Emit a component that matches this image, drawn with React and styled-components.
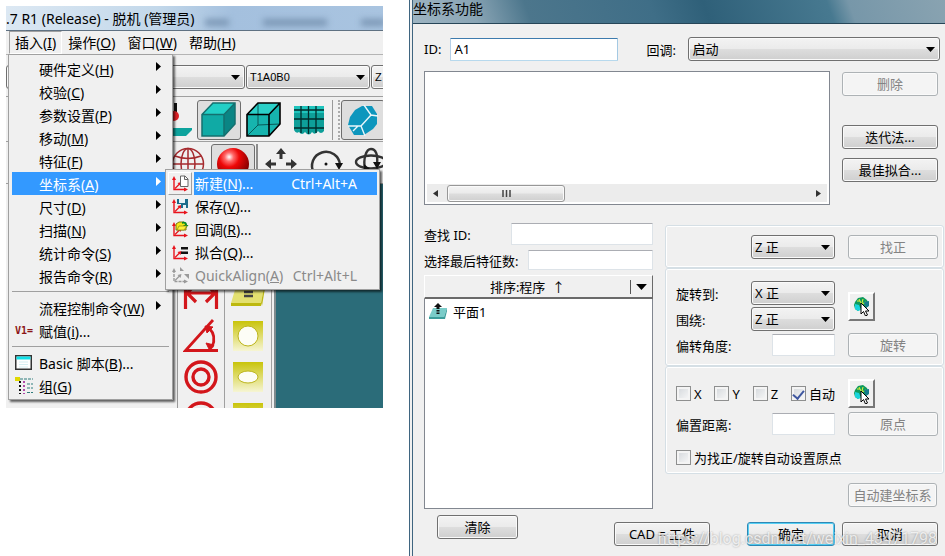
import React, { useState } from 'react';
import styled, { createGlobalStyle, css } from 'styled-components';

const GlobalStyle = createGlobalStyle`
  * {
    box-sizing: border-box;
  }
  body {
    margin: 0;
    background: #fff;
    color: #000;
    font-family: "Noto Sans", "Noto Sans CJK SC", sans-serif;
    font-size: 13px;
  }
  button, input, select {
    margin: 0;
    font: inherit;
    color: inherit;
  }
`;

const insertMenu = [
  { label: '硬件定义', hotkey: 'H', sub: true },
  { label: '校验', hotkey: 'C', sub: true },
  { label: '参数设置', hotkey: 'P', sub: true },
  { label: '移动', hotkey: 'M', sub: true },
  { label: '特征', hotkey: 'F', sub: true },
  { label: '坐标系', hotkey: 'A', sub: true, open: true },
  { label: '尺寸', hotkey: 'D', sub: true },
  { label: '扫描', hotkey: 'N', sub: true },
  { label: '统计命令', hotkey: 'S', sub: true },
  { label: '报告命令', hotkey: 'R', sub: true },
  { divider: true },
  { label: '流程控制命令', hotkey: 'W', sub: true },
  { label: '赋值', hotkey: 'i', dots: true, icon: 'assign' },
  { divider: true },
  { label: 'Basic 脚本', hotkey: 'B', dots: true, icon: 'basic' },
  { label: '组', hotkey: 'G', icon: 'group' },
];

const alignMenu = [
  { label: '新建', hotkey: 'N', dots: true, keys: 'Ctrl+Alt+A', icon: 'new', active: true },
  { label: '保存', hotkey: 'V', dots: true, icon: 'save' },
  { label: '回调', hotkey: 'R', dots: true, icon: 'recall' },
  { label: '拟合', hotkey: 'Q', dots: true, icon: 'fit' },
  { label: 'QuickAlign', hotkey: 'A', keys: 'Ctrl+Alt+L', icon: 'quick', disabled: true },
];

const MenuText = ({ item }) => (
  <span>
    {item.label}(<u>{item.hotkey}</u>){item.dots && '...'}
  </span>
);

/* ---------- icons ---------- */

const Triangle = ({ w = 9, h = 5 }) => (
  <svg width={w} height={h} viewBox="0 0 9 5">
    <path d="M0 0h9L4.500 5z" fill="#000" />
  </svg>
);

const AxisIcon = ({ type }) => {
  const red = type === 'quick' ? '#9a9a9a' : '#e8131c';
  return (
    <svg width="18" height="18" viewBox="0 0 18 18">
      <path d="M3 3v11.500h12" fill="none" stroke={red} strokeWidth="1.4" strokeDasharray={type === 'quick' ? '3 1' : undefined} />
      <path d="M3 1L1 5h4zM17 14.500l-4-2v4z" fill={red} />
      <path d="M4 13.500L9 8.500" stroke={red} strokeWidth="1.3" />
      <path d="M10.500 7l-4 1 3 3z" fill={red} />
      {type === 'new' && <path d="M9.500 1h4.500l3 3v7.500H9.500zM13.500 1v3.500H17" fill="#fff" stroke="#666" />}
      {type === 'save' && (
        <>
          <path d="M6 1h11v9h-7V6H6z" fill="#1a6c8c" />
          <path d="M8 1h6v4H8zM12 7h3v3h-3z" fill="#e6f2f7" />
        </>
      )}
      {type === 'recall' && (
        <>
          <path d="M5 3l3-2h5l2 2v6H5z" fill="#f2e716" stroke="#7d7a10" />
          <path d="M11 1c4-1 5 1 5 3h1.500L15 7l-3-3h2c0-1-1-2-3-1z" fill="#0a8b26" />
          <path d="M6 9l2-4h8l-3 4z" fill="#fff23a" stroke="#8a8412" strokeWidth=".7" />
        </>
      )}
      {type === 'fit' && <path d="M10 3h7v2.500h-7zM10 7.500h7V10h-7z" fill="#111" />}
      {type === 'quick' && <path d="M9 0l4 4H9zM13 7h5v5z" fill="#9a9a9a" />}
    </svg>
  );
};

const ItemIcon = ({ type }) => {
  if (type === 'basic') {
    return (
      <svg width="17" height="15" viewBox="0 0 17 15">
        <rect x=".75" y=".75" width="15.500" height="13.500" fill="#fff" stroke="#333" strokeWidth="1.500" />
        <rect x="1.500" y="1.500" width="14" height="3" fill="#10e0e8" />
        <path d="M4 7h9M4 9.500h9M4 12h9" stroke="#d5eef2" />
      </svg>
    );
  }
  if (type === 'group') {
    return (
      <svg width="18" height="18" viewBox="0 0 18 18">
        <rect x="0" y="0" width="5" height="4" fill="#e0d800" />
        <path d="M5 2h13" stroke="#2e7c7c" strokeDasharray="3 1" />
        <path d="M5 4v13" stroke="#111" strokeWidth="2" strokeDasharray="2 2" />
        <path d="M9 4v13" stroke="#b04aa8" strokeWidth="2" strokeDasharray="2 2" />
        <path d="M12 7h6M12 11h6M12 15.500h6" stroke="#2e7c7c" strokeDasharray="3 1" />
      </svg>
    );
  }
  return <AssignMark>V1=</AssignMark>;
};

const CubeIcon = () => (
  <svg width="36" height="36" viewBox="0 0 36 36">
    <path d="M1 12.500L12 1h22L23 12.500z" fill="#22cfc6" />
    <path d="M1 12.500h22V34H1z" fill="#10aaa5" />
    <path d="M23 12.500L34 1v21L23 34z" fill="#0a8584" />
    <path d="M1 12.500L12 1h22v21L23 34H1zM1 12.500h22V34M23 12.500L34 1" fill="none" stroke="#14706f" strokeWidth="1.500" />
  </svg>
);

const WireCubeIcon = () => (
  <svg width="36" height="36" viewBox="0 0 36 36">
    <path d="M1 12.500L12 1h22v21L23 34H1z" fill="#16b4ae" />
    <path d="M1 12.500L12 1h22L23 12.500z" fill="#2bd0c8" />
    <path d="M12 1v22L1 34M12 23l22-1" fill="none" stroke="#095a58" />
    <path d="M1 12.500L12 1h22v21L23 34H1zM1 12.500h22V34M23 12.500L34 1" fill="none" stroke="#000" strokeWidth="1.600" />
  </svg>
);

const GridIcon = () => (
  <svg width="32" height="32" viewBox="0 0 32 32">
    <path d="M1 2h30v25q-3 4-6 0-3 5-6 1-3 5-7 0-3 4-6 0-3 2-5-2z" fill="#0e9f99" />
    <path d="M1 2h30v7H1z" fill="#1fc4bd" />
    <path d="M8 2v27M15.500 2v28M23 2v27M1 6h30M1 15h30M1 24h30" stroke="#012c2b" strokeWidth="1.300" />
  </svg>
);

const HexIcon = () => (
  <svg width="30" height="31" viewBox="0 0 30 31">
    <path d="M0 20l2-8 5-7 7-4h10l5 8v10l-4 5-9 6H6z" fill="#0d96bd" />
    <path d="M16 0l7 10 7 1M23 10L13 21M0 21h13l4 10M5 26l5-5" fill="none" stroke="#e9f6fa" strokeWidth="1.400" />
  </svg>
);

const ProbeIcon = () => (
  <svg width="36" height="36" viewBox="0 0 36 36">
    <path d="M18 1h3v9h-3z" fill="#111" />
    <path d="M8 26h30l-8 8H4z" fill="#0ea39d" />
    <circle cx="18" cy="14" r="5" fill="#dd2026" />
  </svg>
);

const GlobeIcon = () => (
  <svg width="34" height="34" viewBox="0 0 34 34" fill="none" stroke="#a52a2e" strokeWidth="1.500">
    <circle cx="17" cy="17" r="15.500" />
    <ellipse cx="17" cy="17" rx="7" ry="15.500" />
    <path d="M17 1.500v31M1.500 17h31M4 9q13 5 26 0M4 25q13-5 26 0" />
  </svg>
);

const SphereIcon = () => (
  <svg width="34" height="34" viewBox="0 0 34 34">
    <defs>
      <radialGradient id="sphere" cx=".38" cy=".28" r=".7">
        <stop offset="0" stopColor="#fff" />
        <stop offset=".2" stopColor="#ff6a6a" />
        <stop offset=".45" stopColor="#ee0808" />
        <stop offset="1" stopColor="#7c0000" />
      </radialGradient>
    </defs>
    <circle cx="17" cy="17" r="16" fill="url(#sphere)" />
  </svg>
);

const PanIcon = () => (
  <svg width="34" height="34" viewBox="0 0 34 34" fill="#333">
    <path d="M17 1l5 6h-3.500v5h-3V7H12zM17 33l5-6h-3.500v-5h-3v5H12zM1 17l6-5v3.500h5v3H7V22zM33 17l-6-5v3.500h-5v3h5V22z" />
  </svg>
);

const RotateIcon = () => (
  <svg width="34" height="34" viewBox="0 0 34 34">
    <path d="M5 26A14 14 0 1 1 31 18" fill="none" stroke="#333" strokeWidth="2.500" />
    <path d="M26 16h8l-4 7z" fill="#111" />
    <circle cx="17" cy="17" r="1.500" fill="#111" />
  </svg>
);

const OrbitIcon = () => (
  <svg width="34" height="34" viewBox="0 0 34 34" fill="none" stroke="#333" strokeWidth="2.400">
    <ellipse cx="17" cy="15" rx="15" ry="6.500" />
    <path d="M11 22C9 12 12 2 17 2s7 6 6 15" />
    <path d="M19 15h8l-4 7zM10 17l6 5-6 3z" fill="#111" stroke="none" />
  </svg>
);

const DistanceIcon = () => (
  <svg width="36" height="36" viewBox="0 0 36 36" fill="none" stroke="#d3161b" strokeWidth="3.200">
    <path d="M2.500 3v29M33.500 3v29M4 16h28M13 7l-9 9 9 9M23 7l9 9-9 9" />
  </svg>
);

const AngleIcon = () => (
  <svg width="36" height="36" viewBox="0 0 36 36" fill="none" stroke="#d3161b" strokeWidth="2.800">
    <path d="M30 2L2.500 32.500H35" />
    <path d="M26 10q8 8 3 19" />
    <path d="M22 8l8 1-6 6zM23 25l8 2-4 6z" fill="#d3161b" strokeWidth="1" />
  </svg>
);

const RingsIcon = () => (
  <svg width="36" height="36" viewBox="0 0 36 36" fill="none" stroke="#d3161b" strokeWidth="3.400">
    <circle cx="18" cy="18" r="15" />
    <circle cx="18" cy="18" r="8" />
  </svg>
);

const CircleIcon = () => (
  <svg width="36" height="36" viewBox="0 0 36 36" fill="none" stroke="#d3161b" strokeWidth="3.400">
    <circle cx="18" cy="18" r="15" />
  </svg>
);

const YellowDefs = () => (
  <defs>
    <linearGradient id="yellow" x2="0" y2="1">
      <stop offset="0" stopColor="#c9c40a" />
      <stop offset="1" stopColor="#f6f5d4" />
    </linearGradient>
  </defs>
);

const PlaneIcon = () => (
  <svg width="36" height="36" viewBox="0 0 36 36">
    <path d="M9 0h27l-5 26H1z" fill="#e3e070" />
    <path d="M1 26h30v3H1zM31 26l5-26v5l-4 24z" fill="#bdb80f" />
    <path d="M14 7h9M14 11h9M14 15h9M14 19h9" stroke="#444" strokeWidth="2.400" />
  </svg>
);

const HoleIcon = ({ ry = 10 }) => (
  <svg width="36" height="36" viewBox="0 0 36 36">
    <YellowDefs />
    <rect x="3" y="3" width="30" height="30" fill="url(#yellow)" />
    <ellipse cx="18" cy="18" rx="10" ry={ry} fill="#fdfdf6" stroke="#bdb51e" />
  </svg>
);

const PickIcon = () => (
  <svg width="18" height="20" viewBox="0 0 18 20">
    <path d="M2 6l3-4 5-1 4 3 2 5-3 3H8l-3 3-3-2-1-4z" fill="#0d9a5c" />
    <path d="M2 8l4 1 2 5-3 1-3-2z" fill="#18d4dc" />
    <path d="M4 5h3M6 3l2 4M10 3l-1 4M13 6l-4 2" stroke="#e6f23a" />
    <path d="M11 6l5-1v5l-3 2z" fill="#157b8c" />
    <path d="M8 7v11l2.500-2.500L12.500 20l2-1-2-4H16z" fill="#fff" stroke="#000" />
  </svg>
);

const FeatureIcon = () => (
  <svg width="18" height="16" viewBox="0 0 18 16">
    <path d="M4 5h14l-3 9H0z" fill="#7accc9" />
    <path d="M0 14h15l3-9v3l-2 8H0z" fill="#3c9d9b" />
    <path d="M9 0l4 4h-2.500v2h-3V4H5zM7.500 7h3v1.500h-3zM7.500 9.500h3V11h-3z" fill="#111" />
  </svg>
);

/* ---------- small parts ---------- */

const Combo = ({ label, options, width, grow, small }) => (
  <ComboBox $width={width} $grow={grow} $small={small}>
    <select aria-label={label} defaultValue={options[0]}>
      {options.map((option) => (
        <option key={option}>{option}</option>
      ))}
    </select>
    <Triangle />
  </ComboBox>
);

const Check = ({ children, defaultChecked }) => {
  const [checked, setChecked] = useState(!!defaultChecked);
  return (
    <CheckLabel>
      <input type="checkbox" checked={checked} onChange={() => setChecked(!checked)} />
      {children}
    </CheckLabel>
  );
};

const InsertMenu = () => (
  <Menu>
    {insertMenu.map((item, i) =>
      item.divider ? (
        <Divider key={i} />
      ) : (
        <MenuRow key={i}>
          <MenuItem $active={item.open}>
            <IconSlot>{item.icon && <ItemIcon type={item.icon} />}</IconSlot>
            <MenuText item={item} />
            {item.sub && (
              <SubArrow width="5" height="9" viewBox="0 0 5 9">
                <path d="M0 0l5 4.500L0 9z" fill="currentColor" />
              </SubArrow>
            )}
          </MenuItem>
          {item.open && <AlignMenu />}
        </MenuRow>
      )
    )}
  </Menu>
);

const AlignMenu = () => (
  <SubMenu>
    {alignMenu.map((item) => (
      <SubItem key={item.label} disabled={item.disabled}>
        <SubIcon $raised={item.active}>
          <AxisIcon type={item.icon} />
        </SubIcon>
        <SubText $active={item.active}>
          <MenuText item={item} />
          {item.keys && <span>{item.keys}</span>}
        </SubText>
      </SubItem>
    ))}
  </SubMenu>
);

const MainWindow = () => (
  <AppWindow>
    <AppTitle>
      .7 R1 (Release) - 脱机 (管理员)
      <Smudge $width={24} />
      <Smudge $width={64} />
      <Smudge $width={24} />
    </AppTitle>
    <MenuBar>
      <MenuButton $open>插入(<u>I</u>)</MenuButton>
      <MenuButton>操作(<u>O</u>)</MenuButton>
      <MenuButton>窗口(<u>W</u>)</MenuButton>
      <MenuButton>帮助(<u>H</u>)</MenuButton>
      <InsertMenu />
    </MenuBar>
    <ComboBar>
      <Combo label="测头文件" options={['']} grow small />
      <Combo label="测尖" options={['T1A0B0']} width={124} small />
      <Combo label="工作平面" options={['Z 正']} width={80} small />
    </ComboBar>
    <ToolBar>
      <Tool aria-label="测头"><ProbeIcon /></Tool>
      <Tool aria-label="实体" $on><CubeIcon /></Tool>
      <Tool aria-label="线框"><WireCubeIcon /></Tool>
      <Tool aria-label="网格"><GridIcon /></Tool>
      <Grip />
      <Tool aria-label="剖面" $on><HexIcon /></Tool>
    </ToolBar>
    <ToolBar $second>
      <Tool aria-label="线框球"><GlobeIcon /></Tool>
      <Tool aria-label="实体球" $on><SphereIcon /></Tool>
      <Rule />
      <Tool aria-label="平移"><PanIcon /></Tool>
      <Tool aria-label="旋转"><RotateIcon /></Tool>
      <Tool aria-label="三维旋转"><OrbitIcon /></Tool>
    </ToolBar>
    <WorkArea>
      <Gutter />
      <ToolColumn>
        <DistanceIcon />
        <DistanceIcon />
        <DistanceIcon />
        <AngleIcon />
        <RingsIcon />
        <CircleIcon />
      </ToolColumn>
      <ToolColumn>
        <PlaneIcon />
        <PlaneIcon />
        <PlaneIcon />
        <HoleIcon />
        <HoleIcon ry={6} />
        <HoleIcon />
      </ToolColumn>
      <Viewport />
    </WorkArea>
  </AppWindow>
);

const AlignDialog = () => (
  <Dialog>
    <DialogTitle>坐标系功能</DialogTitle>
    <DialogBody>
      <TopRow>
        <label htmlFor="align-id">ID:</label>
        <IdInput id="align-id" defaultValue="A1" />
        <RecallLabel>回调:</RecallLabel>
        <Combo label="回调" options={['启动']} grow />
      </TopRow>
      <ListRow>
        <ListBox>
          <ScrollBar>
            <svg width="5" height="7" viewBox="0 0 5 7"><path d="M5 0v7L0 3.500z" fill="#333" /></svg>
            <Thumb>
              <svg width="9" height="7" viewBox="0 0 9 7"><path d="M1 0v7M4.500 0v7M8 0v7" stroke="#444" strokeWidth="1.500" /></svg>
            </Thumb>
            <svg width="5" height="7" viewBox="0 0 5 7"><path d="M0 0v7l5-3.500z" fill="#333" /></svg>
          </ScrollBar>
        </ListBox>
        <ListActions>
          <Button disabled>删除</Button>
          <Button>迭代法...</Button>
          <Button>最佳拟合...</Button>
        </ListActions>
      </ListRow>
      <Columns>
        <FeatureSide>
          <Field>
            <label htmlFor="find-id">查找 ID:</label>
            <TextInput id="find-id" $width={142} />
          </Field>
          <Field>
            <label htmlFor="last-count">选择最后特征数:</label>
            <TextInput id="last-count" $width={125} $short />
          </Field>
          <SortHeader>
            <span>排序:程序&nbsp; ↑</span>
            <SortDrop><Triangle w={11} h={6} /></SortDrop>
          </SortHeader>
          <FeatureList>
            <li>
              <FeatureIcon />
              平面1
            </li>
          </FeatureList>
        </FeatureSide>
        <OptionSide>
          <Group>
            <FormLine $end><Combo label="找正轴" options={['Z 正']} width={84} /></FormLine>
            <Button disabled>找正</Button>
          </Group>
          <Group>
            <FormStack>
              <FormLine>旋转到:<Combo label="旋转到" options={['X 正']} width={84} /></FormLine>
              <FormLine>围绕:<Combo label="围绕" options={['Z 正']} width={84} /></FormLine>
            </FormStack>
            <PickButton aria-label="拾取旋转"><PickIcon /></PickButton>
            <FormLine>
              <label htmlFor="offset-angle">偏转角度:</label>
              <TextInput id="offset-angle" $width={63} />
            </FormLine>
            <Button disabled>旋转</Button>
          </Group>
          <Group $roomy>
            <CheckLine>
              <Check>X</Check>
              <Check>Y</Check>
              <Check>Z</Check>
              <Check defaultChecked>自动</Check>
            </CheckLine>
            <PickButton aria-label="拾取原点"><PickIcon /></PickButton>
            <FormLine>
              <label htmlFor="offset-distance">偏置距离:</label>
              <TextInput id="offset-distance" $width={63} />
            </FormLine>
            <Button disabled>原点</Button>
            <WideLine>
              <Check>为找正/旋转自动设置原点</Check>
            </WideLine>
          </Group>
          <AutoButton disabled>自动建坐标系</AutoButton>
        </OptionSide>
      </Columns>
      <Footer>
        <ClearButton>清除</ClearButton>
        <FooterActions>
          <Button>CAD = 工件</Button>
          <Button $primary>确定</Button>
          <Button>取消</Button>
        </FooterActions>
      </Footer>
      <Watermark>https://blog.csdn.net/weixin_43471798</Watermark>
    </DialogBody>
  </Dialog>
);

const App = () => (
  <Page>
    <GlobalStyle />
    <MainWindow />
    <AlignDialog />
  </Page>
);

export default App;

const face = css`
  background: linear-gradient(#f3f3f3, #ebebeb 48%, #dddddd 52%, #cfcfcf);
  border: 1px solid #707070;
  border-radius: 3px;
  box-shadow: inset 0 0 0 1px #fafafa;
`;

const Page = styled.main`
  display: flex;
  align-items: flex-start;
  gap: 26px;
  padding-left: 6px;
  min-height: 100vh;
`;

const AppWindow = styled.section`
  flex: 0 0 42%;
  max-width: 377px;
  margin-top: 6px;
  background: #f0f0f0;
  overflow: hidden;
  font-size: 14px;
`;

const AppTitle = styled.header`
  display: flex;
  align-items: center;
  height: 25px;
  white-space: nowrap;
  overflow: hidden;
  background: linear-gradient(90deg, #dce8f3, #c3d8ea 40%, #a4c0de 60%, #a9c4e0);
  border-bottom: 1px solid #5f7182;
`;

const Smudge = styled.i`
  flex: 0 0 auto;
  align-self: flex-end;
  width: ${(p) => p.$width}px;
  height: 7px;
  margin: 0 24px 4px 10px;
  background: #7b97b5;
  filter: blur(3px);
`;

const MenuBar = styled.nav`
  position: relative;
  display: flex;
  height: 24px;
  padding-left: 3px;
  border-bottom: 1px solid #b4b4b4;
`;

const MenuButton = styled.button`
  flex: 0 0 auto;
  padding: 0 5px;
  line-height: 20px;
  white-space: nowrap;
  background: none;
  border: 1px solid transparent;
  ${(p) => p.$open && css`border-color: #a0a0a0 #fff #fff #a0a0a0;`}
`;

const Menu = styled.div`
  position: absolute;
  z-index: 2;
  top: 23px;
  left: 2px;
  width: 165px;
  padding: 2px 3px;
  background: #f0f0f0;
  border: 1px solid #a0a0a0;
  box-shadow: 2px 2px 2px rgba(0, 0, 0, 0.6);
`;

const MenuRow = styled.div`
  position: relative;
`;

const MenuItem = styled.button`
  display: flex;
  align-items: center;
  width: 100%;
  height: 23px;
  padding: 0 8px 0 0;
  border: 0;
  text-align: left;
  white-space: nowrap;
  background: ${(p) => (p.$active ? '#3399ff' : 'none')};
  color: ${(p) => (p.$active ? '#fff' : '#000')};
`;

const IconSlot = styled.span`
  display: flex;
  flex: 0 0 27px;
  padding-left: 3px;
`;

const AssignMark = styled.b`
  color: #8c1616;
  font: bold 10px "DejaVu Sans Mono", monospace;
`;

const SubArrow = styled.svg`
  margin: 0 0 4px auto;
`;

const Divider = styled.hr`
  margin: 4px 0;
  border: 0;
  border-top: 1px solid #a0a0a0;
`;

const SubMenu = styled.div`
  position: absolute;
  top: -3px;
  left: 153px;
  width: 215px;
  padding: 2px;
  background: #f0f0f0;
  border: 1px solid #a0a0a0;
  box-shadow: 2px 2px 2px rgba(0, 0, 0, 0.6);
`;

const SubItem = styled.button`
  display: flex;
  width: 100%;
  height: 23px;
  padding: 0;
  gap: 2px;
  border: 0;
  background: none;
  color: ${(p) => (p.disabled ? '#8a8a8a' : '#000')};
`;

const SubIcon = styled.span`
  display: flex;
  flex: 0 0 24px;
  height: 23px;
  align-items: center;
  justify-content: center;
  border: 1px solid;
  border-color: ${(p) => (p.$raised ? '#fff #a0a0a0 #a0a0a0 #fff' : 'transparent')};
`;

const SubText = styled.span`
  display: flex;
  flex: 1;
  justify-content: space-between;
  padding: 0 20px 0 1px;
  line-height: 23px;
  white-space: nowrap;
  ${(p) => p.$active && css`
    background: #3399ff;
    color: #fff;
  `}
`;

const ComboBar = styled.div`
  display: flex;
  height: 42px;
  padding-top: 10px;
  margin-right: -68px;
  gap: 1px;
  border-bottom: 1px solid #a0a0a0;
`;

const ComboBox = styled.span`
  position: relative;
  display: block;
  flex: ${(p) => (p.$grow ? '1' : `0 0 ${p.$width}px`)};
  height: 24px;

  select {
    ${face}
    appearance: none;
    display: block;
    width: 100%;
    height: 100%;
    padding: 0 18px 0 3px;
    font-size: 13px;
    ${(p) => p.$small && css`
      font-family: "Liberation Sans", "Noto Sans CJK SC", sans-serif;
      font-size: 11px;
    `}
  }
  svg {
    position: absolute;
    right: 5px;
    top: 10px;
    pointer-events: none;
  }
`;

const ToolBar = styled.div`
  display: flex;
  align-items: center;
  gap: 1px;
  height: ${(p) => (p.$second ? 42 : 45)}px;
  padding: 2px 0 0 ${(p) => (p.$second ? 160 : 146)}px;
  margin-right: -20px;
  border-bottom: 1px solid #a0a0a0;
`;

const Tool = styled.button`
  display: flex;
  flex: 0 0 44px;
  height: 40px;
  padding: 0;
  align-items: center;
  justify-content: center;
  background: ${(p) => (p.$on ? '#dedede' : 'none')};
  border: 1px solid ${(p) => (p.$on ? '#6e6e6e' : 'transparent')};
  border-radius: 3px;
`;

const Grip = styled.i`
  flex: 0 0 8px;
  height: 40px;
  border-left: 1px solid #999;
  border-right: 2px dotted #aaa;
`;

const Rule = styled.i`
  flex: 0 0 2px;
  height: 40px;
  background: #8c8c8c;
`;

const WorkArea = styled.div`
  display: flex;
  height: 224px;
  overflow: hidden;
`;

const Gutter = styled.div`
  flex: 0 0 172px;
  border-right: 1px solid #999;
`;

const ToolColumn = styled.div`
  display: flex;
  flex: 0 0 47px;
  flex-direction: column;
  align-items: center;
  gap: 5px;
  padding-top: 11px;
  border-right: 1px solid #a0a0a0;

  svg {
    flex: 0 0 36px;
  }
`;

const Viewport = styled.div`
  flex: 1;
  margin-left: 2px;
  background: #2b6c79;
  border-left: 2px solid #7f8b8e;
`;

const Dialog = styled.section`
  flex: 1;
  min-width: 0;
  min-height: 100vh;
  background: #f0f0f0;
  border-left: 4px double #3f6580;
`;

const DialogTitle = styled.header`
  height: 24px;
  line-height: 18px;
  font-size: 14px;
  background: linear-gradient(70deg, #9db4c2, #8aa5b5 12%, #4c768c 22%, #3f6e87 45%, #2f6079 55%, #477990 78%, #7797a9 82%, #89a3b1);
  border-bottom: 1px solid #274658;
`;

const DialogBody = styled.form`
  position: relative;
  padding: 13px 0 11px 11px;
`;

const TopRow = styled.div`
  display: flex;
  align-items: center;
  height: 24px;
  gap: 9px;
  padding-right: 5px;
`;

const inputLook = css`
  min-width: 0;
  padding: 0 3px;
  background: #fff;
  border: 1px solid #dde3e8;
  border-top-color: #abadb3;
  border-radius: 1px;
`;

const IdInput = styled.input`
  ${inputLook}
  flex: 0 1 168px;
  height: 23px;
  border-color: #3d7bad #a4c9e3 #b7d9ed #b5cfe7;
`;

const RecallLabel = styled.span`
  margin-left: 19px;
  flex: 0 0 33px;
`;

const ListRow = styled.div`
  display: flex;
  gap: 12px;
  margin-top: 10px;
  padding-right: 7px;
`;

const ListBox = styled.div`
  display: flex;
  flex: 1;
  flex-direction: column;
  justify-content: flex-end;
  height: 134px;
  padding: 2px;
  background: #fff;
  border: 1px solid #828790;
`;

const ScrollBar = styled.div`
  display: flex;
  align-items: center;
  height: 18px;
  padding: 0 6px;
  gap: 9px;
  background: #ececec;

  > svg:last-child {
    margin-left: auto;
  }
`;

const Thumb = styled.span`
  ${face}
  display: flex;
  align-items: center;
  justify-content: center;
  width: 118px;
  height: 17px;
  border-color: #979797;
`;

const Button = styled.button.attrs({ type: 'button' })`
  ${face}
  height: 24px;
  padding: 0 4px;
  line-height: 20px;
  white-space: nowrap;
  ${(p) => p.$primary && css`
    border-color: #2f88b5;
    box-shadow: inset 0 0 0 1px #55d0f5;
  `}
  &:disabled {
    background: #f4f4f4;
    border-color: #adb2b5;
    color: #838383;
  }
`;

const ListActions = styled.div`
  display: flex;
  flex: 0 0 96px;
  flex-direction: column;
  gap: 9px;
  padding-top: 1px;

  ${Button}:first-child {
    margin-bottom: 20px;
  }
`;

const Columns = styled.div`
  display: flex;
  gap: 12px;
  margin-top: 16px;
  padding-right: 1px;
`;

const FeatureSide = styled.div`
  display: flex;
  flex: 0 1 229px;
  flex-direction: column;
`;

const Field = styled.div`
  display: flex;
  align-items: center;
  justify-content: space-between;
  height: 26px;
  white-space: nowrap;
`;

const TextInput = styled.input`
  ${inputLook}
  width: ${(p) => p.$width}px;
  height: ${(p) => (p.$short ? 20 : 22)}px;
`;

const SortHeader = styled.button.attrs({ type: 'button' })`
  display: flex;
  align-items: center;
  height: 24px;
  padding: 0 5px 0 0;
  margin-top: 2px;
  background: #f0f0f0;
  border: 1px solid;
  border-color: #fff #6a6a6a #6a6a6a #fff;
  border-bottom-width: 2px;

  > span:first-child {
    flex: 1;
  }
`;

const SortDrop = styled.span`
  display: flex;
  align-items: center;
  height: 14px;
  padding-left: 5px;
  border-left: 1px solid #555;
`;

const FeatureList = styled.ul`
  flex: 1;
  margin: 0;
  padding: 2px 4px;
  list-style: none;
  background: #fff;
  border: 1px solid #828790;
  border-top: 0;

  li {
    display: flex;
    align-items: center;
    gap: 6px;
    height: 20px;
  }
`;

const OptionSide = styled.div`
  display: flex;
  flex: 1;
  flex-direction: column;
  padding-top: 4px;
`;

const Group = styled.fieldset`
  display: grid;
  grid-template-columns: 1fr 90px;
  align-items: center;
  gap: ${(p) => (p.$roomy ? 4 : 2)}px 13px;
  min-width: 0;
  margin: 0;
  padding: 9px 5px ${(p) => (p.$roomy ? 6 : 8)}px 10px;
  border: 1px solid #d5dfe5;
  border-radius: 3px;
  box-shadow: inset 0 0 0 1px #fff;

  & + & {
    padding-top: 12px;
  }
`;

const FormLine = styled.div`
  display: flex;
  align-items: center;
  justify-content: ${(p) => (p.$end ? 'flex-end' : 'space-between')};
`;

const FormStack = styled.div`
  display: grid;
  gap: 2px;
`;

const PickButton = styled.button.attrs({ type: 'button' })`
  display: flex;
  align-items: center;
  justify-content: center;
  width: 27px;
  height: 29px;
  padding: 0;
  background: #f0f0f0;
  border: 2px solid;
  border-color: #fff #777 #777 #fff;
`;

const CheckLine = styled.div`
  display: flex;
  justify-content: space-between;
`;

const WideLine = styled.div`
  grid-column: 1 / -1;
  padding: 8px 0 0;
`;

const CheckLabel = styled.label`
  display: flex;
  align-items: center;
  gap: 3px;
  white-space: nowrap;

  input {
    appearance: none;
    display: grid;
    place-items: center;
    width: 15px;
    height: 15px;
    background: linear-gradient(135deg, #d2d6da, #fafafa);
    border: 1px solid #8e8f8f;
    box-shadow: inset 0 0 0 2px #f4f4f4;
  }
  input:checked::after {
    content: "";
    width: 5px;
    height: 9px;
    border: solid #3f57a0;
    border-width: 0 2px 2px 0;
    transform: rotate(40deg);
  }
`;

const AutoButton = styled(Button)`
  align-self: flex-end;
  width: 89px;
  margin: 9px 7px 2px 0;
`;

const Footer = styled.footer`
  display: flex;
  justify-content: space-between;
  align-items: flex-start;
  margin-top: 6px;
  padding: 0 7px 0 13px;
`;

const ClearButton = styled(Button)`
  width: 81px;
`;

const FooterActions = styled.div`
  display: flex;
  gap: 7px;
  padding-top: 7px;

  ${Button} {
    width: 96px;
  }
  ${Button}:nth-child(2) {
    width: 88px;
    margin-left: 30px;
  }
`;

const Watermark = styled.span`
  position: absolute;
  right: 8px;
  bottom: 9px;
  color: rgba(255, 255, 255, 0.75);
  font: 16px Roboto, sans-serif;
  text-shadow: 0 0 2px rgba(0, 0, 0, 0.35);
  pointer-events: none;
`;
